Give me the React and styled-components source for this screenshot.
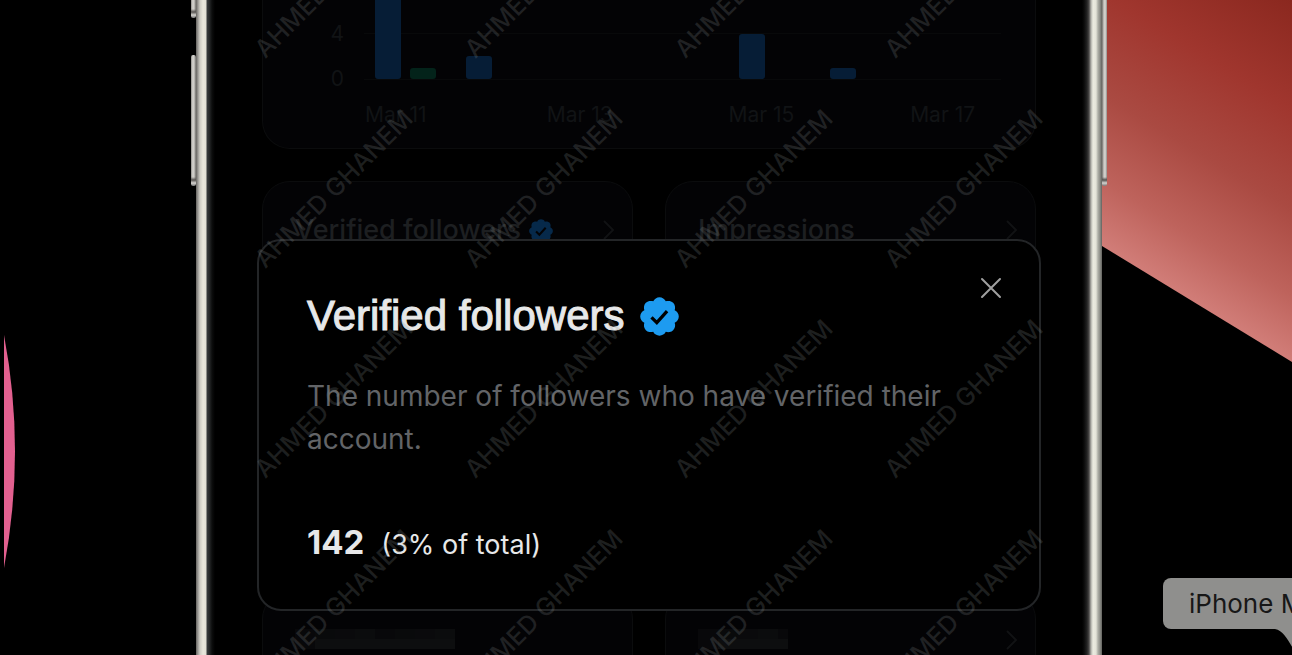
import React from "react";
import styled, { createGlobalStyle } from "styled-components";

const Global = createGlobalStyle`
  *, *::before, *::after { box-sizing: border-box; }
  body { margin: 0; background: #000; font-family: Inter, "Liberation Sans", sans-serif; }
  h2, h3, p { margin: 0; }
  button { font: inherit; color: inherit; background: none; border: 0; padding: 0; text-align: left; cursor: pointer; }
`;

const Stage = styled.main`
  display: grid;
  grid-template-columns: minmax(0, 196fr) minmax(0, 906fr) minmax(0, 190fr);
  grid-template-rows: 100%;
  height: 100vh;
  overflow: hidden;
  background: #000;
`;

const LeftSide = styled.div`
  padding: 335px 0 0 4px;
  svg { display: block; }
`;

const RightSide = styled.div`
  display: flex;
  flex-direction: column;
  justify-content: space-between;
  overflow: hidden;
`;

const Wallpaper = styled.svg`
  display: block;
  width: 100%;
  height: 362px;
`;

const Bubble = styled.div`
  position: relative;
  margin: 0 -60px 26px 61px;
  padding: 0 26px;
  border-radius: 8px;
  background: #8f8f8d;
  color: #171717;
  font-size: 26px;
  line-height: 51px;
  white-space: nowrap;
  svg { position: absolute; left: 112px; top: 100%; }
`;

const Phone = styled.div`
  position: relative;
  min-width: 0;
  padding: 0 66px;
  background:
    linear-gradient(90deg, #65635f 0, #9c9a96 2px, #cfcdc4 4px, #e9e7dc 7px, #e2e0d5 10px, #383b3c 11px, #2a2c2d 13px, #0c0d0d 16px, transparent 19px) left / 20px 100% no-repeat,
    linear-gradient(270deg, #62625e 0, #8d8e88 2px, #adaea6 4px, #e3e3d8 6px, #ebebe0 9px, #b0b0aa 11px, #4a4847 13px, #232323 15px, #0a0a0a 18px, transparent 20px) right / 20px 100% no-repeat,
    #000;
`;

const SideButton = styled.span`
  position: absolute;
  top: ${(p) => p.$top}px;
  ${(p) => p.$side}: -5px;
  width: 5px;
  height: ${(p) => p.$height}px;
  border-radius: 2px;
  background:
    linear-gradient(#0000 calc(100% - 9px), #55524f calc(100% - 6px), #d5d3cf calc(100% - 3px), #777 100%),
    linear-gradient(${(p) => (p.$side === "left" ? 90 : 270)}deg, #918f8b, #dddbd6 2px, #aaa8a4 4px, #65635f);
`;

const Screen = styled.div`
  display: grid;
  gap: 32px;
`;

const Panel = styled.section`
  border: 1px solid #0b0c0d;
  border-radius: 28px;
  background: #030305;
`;

const ChartPanel = styled(Panel)`
  display: grid;
  grid-template-columns: 81px 1fr;
  column-gap: 20px;
  height: 149px;
  padding-right: 34px;
  border-top: 0;
  border-radius: 0 0 28px 28px;
  color: #111315;
  font-size: 21px;
`;

const Axis = styled.div`
  display: grid;
  gap: 23px;
  align-content: start;
  padding-top: 23px;
  line-height: 22px;
  text-align: right;
`;

const Plot = styled.div`
  display: grid;
  grid-template-columns: repeat(7, 1fr);
  grid-template-rows: 79px;
  overflow: hidden;
  border-bottom: 1px solid #08090a;
  background: linear-gradient(#08090a, #08090a) 0 33px / 100% 1px no-repeat;
`;

const Day = styled.div`
  display: flex;
  align-items: flex-end;
  gap: 9px;
  padding-left: 11px;
`;

const Bar = styled.i`
  flex: none;
  width: 26px;
  border-radius: 3px;
  background: ${(p) => (p.$tone === "green" ? "#03231a" : "#061d36")};
`;

const Dates = styled.div`
  display: grid;
  grid-template-columns: 2fr 2fr 2fr 1fr;
  padding: 23px 0 0 1px;
  line-height: 24px;
  white-space: nowrap;
`;

const Cards = styled.div`
  display: grid;
  grid-template-columns: 1fr 1fr;
  gap: 32px;
`;

const Card = styled.button`
  display: flex;
  align-items: flex-start;
  gap: 8px;
  height: 378px;
  padding: 31px 16px 0 32px;
  border: 1px solid #0b0c0d;
  border-radius: 28px;
  background: #030305;
  color: #1d1f21;
  font-size: 27px;
  font-weight: 500;
  line-height: 34px;
  white-space: nowrap;
  svg { flex: none; margin-top: 6px; }
`;

const ChevronIcon = styled.svg`
  margin-left: auto;
`;

const Dialog = styled.section`
  position: absolute;
  top: 239px;
  left: 61px;
  right: 61px;
  min-height: 372px;
  padding: 49px 48px 0;
  border: 2px solid #232527;
  border-radius: 24px;
  background: #000;
`;

const Title = styled.h2`
  display: flex;
  align-items: center;
  gap: 16px;
  color: #e7e8e9;
  font-family: "Liberation Sans", sans-serif;
  font-size: 42px;
  font-weight: 400;
  line-height: 52px;
  -webkit-text-stroke: 1px #e7e8e9;
  white-space: nowrap;
  svg { -webkit-text-stroke: 0; }
`;

const Description = styled.p`
  margin-top: 33px;
  color: #626467;
  font-size: 28px;
  line-height: 43px;
`;

const Count = styled.p`
  display: flex;
  align-items: baseline;
  gap: 17px;
  margin-top: 61px;
  color: #e7e8e9;
  font-size: 27px;
  line-height: 40px;
  strong { font-size: 33px; font-weight: 700; }
`;

const Close = styled.button`
  position: absolute;
  top: 35px;
  right: 36px;
  display: grid;
  svg { display: block; }
`;

const Watermarks = styled.div`
  position: absolute;
  inset: 0 58px 0 63px;
  display: grid;
  grid-template-columns: repeat(4, 210px);
  grid-auto-rows: 210px;
  align-content: start;
  padding-top: 53px;
  pointer-events: none;
`;

const Mark = styled.span`
  height: 0;
  color: rgba(136, 144, 144, 0.22);
  font-size: 25px;
  font-weight: 500;
  line-height: 0;
  white-space: nowrap;
  transform: rotate(-45deg);
  transform-origin: 0 0;
`;

function Badge({ size, fill, check }) {
  return (
    <svg width={size} height={size} viewBox="1.5 1.5 19 19" aria-hidden="true">
      <path
        fill={fill}
        d="M20.396 11c-.018-.646-.215-1.275-.57-1.816-.354-.54-.852-.972-1.438-1.246.223-.607.27-1.264.14-1.897-.131-.634-.437-1.218-.882-1.687-.47-.445-1.053-.75-1.687-.882-.633-.13-1.29-.083-1.897.14-.273-.587-.704-1.086-1.245-1.44S11.647 1.62 11 1.604c-.646.017-1.273.213-1.813.568s-.969.854-1.24 1.44c-.608-.223-1.267-.272-1.902-.14-.635.13-1.22.436-1.69.882-.445.47-.749 1.055-.878 1.688-.13.633-.08 1.29.144 1.896-.587.274-1.087.705-1.443 1.245-.356.54-.555 1.17-.574 1.817.02.647.218 1.276.574 1.817.356.54.856.972 1.443 1.245-.224.606-.274 1.263-.144 1.896.13.634.433 1.218.877 1.688.47.443 1.054.747 1.687.878.633.132 1.29.084 1.897-.136.274.586.705 1.084 1.246 1.439.54.354 1.17.551 1.816.569.647-.016 1.276-.213 1.817-.567s.972-.854 1.245-1.44c.604.239 1.266.296 1.903.164.636-.132 1.22-.447 1.68-.907.46-.46.776-1.044.908-1.681s.075-1.299-.165-1.903c.586-.274 1.084-.705 1.439-1.246.354-.54.551-1.17.569-1.816z"
      />
      <path d="M7.1 11.4l2.6 2.6 5-5.6" fill="none" stroke={check} strokeWidth="1.6" />
    </svg>
  );
}

function Chevron() {
  return (
    <ChevronIcon width="14" height="22" viewBox="0 0 14 22" aria-hidden="true">
      <path d="M2 2l9 9-9 9" fill="none" stroke="#111214" strokeWidth="2" />
    </ChevronIcon>
  );
}

function Mosaic({ width }) {
  const tones = ["#090a0b", "#08080a", "#0b0c0d", "#0a0a0c"];
  const cells = [];
  for (let x = 0, i = 0; x < width; x += 20, i++) {
    cells.push(<rect key={`a${x}`} x={x} y="0" width="20" height="10" fill={tones[(i * 3 + 1) % 4]} />);
    cells.push(<rect key={`b${x}`} x={x} y="10" width="20" height="10" fill={i === 0 ? "#08080a" : "#0d0e0f"} />);
  }
  return (
    <svg width={width} height="20" aria-hidden="true">
      {cells}
    </svg>
  );
}

const days = [
  [{ tone: "blue", h: 120 }, { tone: "green", h: 11 }],
  [{ tone: "blue", h: 23 }],
  [],
  [],
  [{ tone: "blue", h: 45 }],
  [{ tone: "blue", h: 11 }],
  [],
];

export default function App() {
  return (
    <>
      <Global />
      <Stage>
        <LeftSide>
          <svg width="12" height="233" viewBox="0 0 12 233" aria-hidden="true">
            <path d="M0 0Q22 116 0 233z" fill="#e2608f" />
          </svg>
        </LeftSide>

        <Phone>
          <SideButton $side="left" $top={-60} $height={78} />
          <SideButton $side="left" $top={55} $height={131} />
          <SideButton $side="right" $top={-20} $height={206} />

          <Screen>
            <ChartPanel aria-label="Followers over time">
              <Axis>
                <span>4</span>
                <span>0</span>
              </Axis>
              <div>
                <Plot>
                  {days.map((bars, i) => (
                    <Day key={i}>
                      {bars.map((b) => (
                        <Bar key={b.tone} $tone={b.tone} style={{ height: b.h }} />
                      ))}
                    </Day>
                  ))}
                </Plot>
                <Dates>
                  <span>Mar 11</span>
                  <span>Mar 13</span>
                  <span>Mar 15</span>
                  <span>Mar 17</span>
                </Dates>
              </div>
            </ChartPanel>
            <Cards>
              <Card>
                Verified followers
                <Badge size={24} fill="#06294a" check="#030305" />
                <Chevron />
              </Card>
              <Card>
                Impressions
                <Chevron />
              </Card>
              <Card aria-label="Hidden metric">
                <Mosaic width={160} />
              </Card>
              <Card aria-label="Hidden metric">
                <Mosaic width={90} />
                <Chevron />
              </Card>
            </Cards>
          </Screen>

          <Dialog role="dialog" aria-labelledby="dialog-title">
            <Close aria-label="Close">
              <svg width="24" height="24" viewBox="0 0 24 24" aria-hidden="true">
                <path d="M3 3l18 18M21 3L3 21" stroke="#a0a0a0" strokeWidth="2" strokeLinecap="round" />
              </svg>
            </Close>
            <Title id="dialog-title">
              Verified followers
              <Badge size={39} fill="#1d9bf0" check="#000" />
            </Title>
            <Description>The number of followers who have verified their account.</Description>
            <Count>
              <strong>142</strong>
              <span>(3% of total)</span>
            </Count>
          </Dialog>

          <Watermarks aria-hidden="true">
            {Array.from({ length: 16 }, (_, i) => (
              <Mark key={i}>AHMED GHANEM</Mark>
            ))}
          </Watermarks>
        </Phone>

        <RightSide>
          <Wallpaper viewBox="0 0 190 362" preserveAspectRatio="none" aria-hidden="true">
            <defs>
              <linearGradient id="red" gradientUnits="userSpaceOnUse" x1="0" y1="246" x2="160" y2="-18">
                <stop offset="0" stopColor="#d17d78" />
                <stop offset="0.18" stopColor="#be635c" />
                <stop offset="0.42" stopColor="#aa4a42" />
                <stop offset="0.7" stopColor="#a0362e" />
                <stop offset="1" stopColor="#8b281f" />
              </linearGradient>
            </defs>
            <path d="M0 0H190V362L0 246z" fill="url(#red)" />
          </Wallpaper>
          <Bubble>
            iPhone M
            <svg width="40" height="26" viewBox="0 0 40 26" aria-hidden="true">
              <path d="M0 0H40V26H22C14 14 10 2 0 0z" fill="#8f8f8d" />
            </svg>
          </Bubble>
        </RightSide>
      </Stage>
    </>
  );
}
